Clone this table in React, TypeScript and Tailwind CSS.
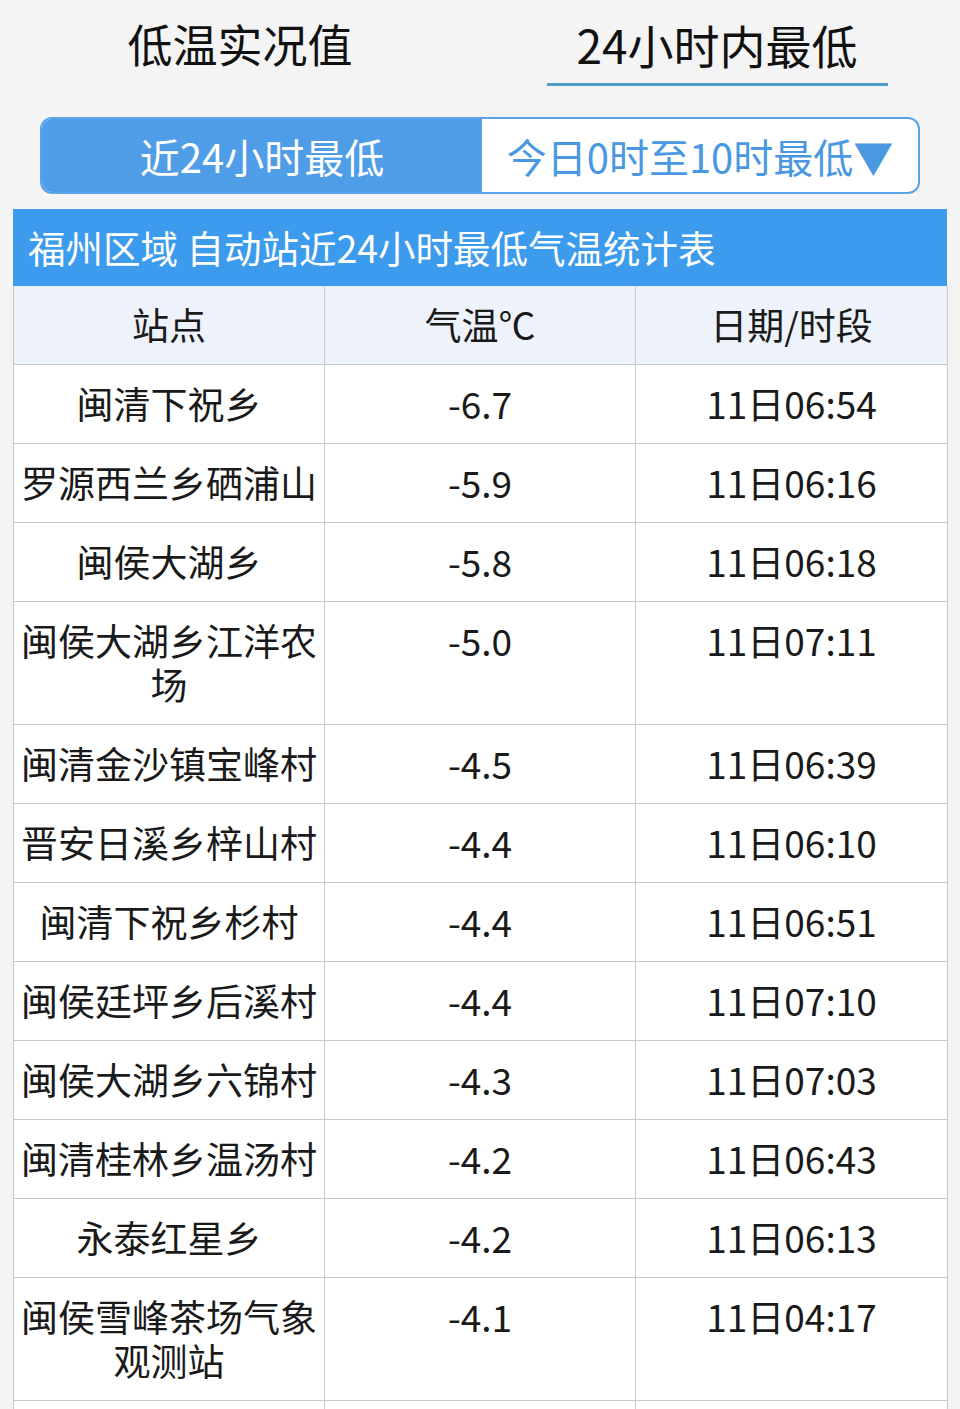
import React from 'react';

interface Row {
  station: string;
  temp: string;
  time: string;
}

const rows: Row[] = [
  { station: '闽清下祝乡', temp: '-6.7', time: '11日06:54' },
  { station: '罗源西兰乡硒浦山', temp: '-5.9', time: '11日06:16' },
  { station: '闽侯大湖乡', temp: '-5.8', time: '11日06:18' },
  { station: '闽侯大湖乡江洋农场', temp: '-5.0', time: '11日07:11' },
  { station: '闽清金沙镇宝峰村', temp: '-4.5', time: '11日06:39' },
  { station: '晋安日溪乡梓山村', temp: '-4.4', time: '11日06:10' },
  { station: '闽清下祝乡杉村', temp: '-4.4', time: '11日06:51' },
  { station: '闽侯廷坪乡后溪村', temp: '-4.4', time: '11日07:10' },
  { station: '闽侯大湖乡六锦村', temp: '-4.3', time: '11日07:03' },
  { station: '闽清桂林乡温汤村', temp: '-4.2', time: '11日06:43' },
  { station: '永泰红星乡', temp: '-4.2', time: '11日06:13' },
  { station: '闽侯雪峰茶场气象观测站', temp: '-4.1', time: '11日04:17' },
  { station: '', temp: '', time: '' },
];

const font = { fontFamily: '"Noto Sans CJK SC", "Noto Sans", sans-serif' };

const cell = 'border border-[#c9c9c9] px-[4px] pt-[16px] pb-[18px] align-top text-center text-[37px] leading-[44px] text-[#1a1a1a]';

const App = () => {
  return (
    <div className="min-h-screen bg-[#f4f4f4]" style={font}>
      {/* Top tabs */}
      <div className="flex h-[86px]">
        <div className="w-[480px] flex justify-center pt-[14px]">
          <span className="text-[45px] leading-[60px] text-[#111]">低温实况值</span>
        </div>
        <div className="w-[480px] flex justify-center pt-[14px] pr-[6px]">
          <div className="flex flex-col items-center">
            <span className="text-[46px] leading-[60px] text-[#111] px-[32px]">24小时内最低</span>
            <div className="w-[341px] h-[3px] bg-[#4f9fc9] mt-[9px]" />
          </div>
        </div>
      </div>

      {/* Segmented control */}
      <div className="px-[40px] pt-[31px]">
        <div className="flex h-[77px] rounded-[12px] border-2 border-[#5aa3e6] overflow-hidden bg-white">
          <div className="w-[440px] bg-[#4f9de6] flex items-center justify-center text-white text-[40px]">
            近24小时最低
          </div>
          <div className="flex-1 flex items-center justify-center text-[#4a98e2] text-[40px]">
            今日0时至10时最低▼
          </div>
        </div>
      </div>

      {/* Table */}
      <div className="px-[13px] pt-[15px]">
        <div className="h-[77px] bg-[#3c9bed] flex items-center pl-[15px] text-white text-[37.5px]">
          福州区域 自动站近24小时最低气温统计表
        </div>
        <table className="w-[934px] table-fixed border-collapse bg-white">
          <colgroup>
            <col className="w-[311px]" />
            <col className="w-[311px]" />
            <col className="w-[312px]" />
          </colgroup>
          <thead>
            <tr className="bg-[#eef2fa]">
              <th className={`${cell} font-normal border-t-0`}>站点</th>
              <th className={`${cell} font-normal border-t-0`}>气温℃</th>
              <th className={`${cell} font-normal border-t-0`}>日期/时段</th>
            </tr>
          </thead>
          <tbody>
            {rows.map((r, i) => (
              <tr key={i}>
                <td className={cell}>{r.station || '\u00a0'}</td>
                <td className={cell}>{r.temp}</td>
                <td className={cell}>{r.time}</td>
              </tr>
            ))}
          </tbody>
        </table>
      </div>
    </div>
  );
};

export default App;
